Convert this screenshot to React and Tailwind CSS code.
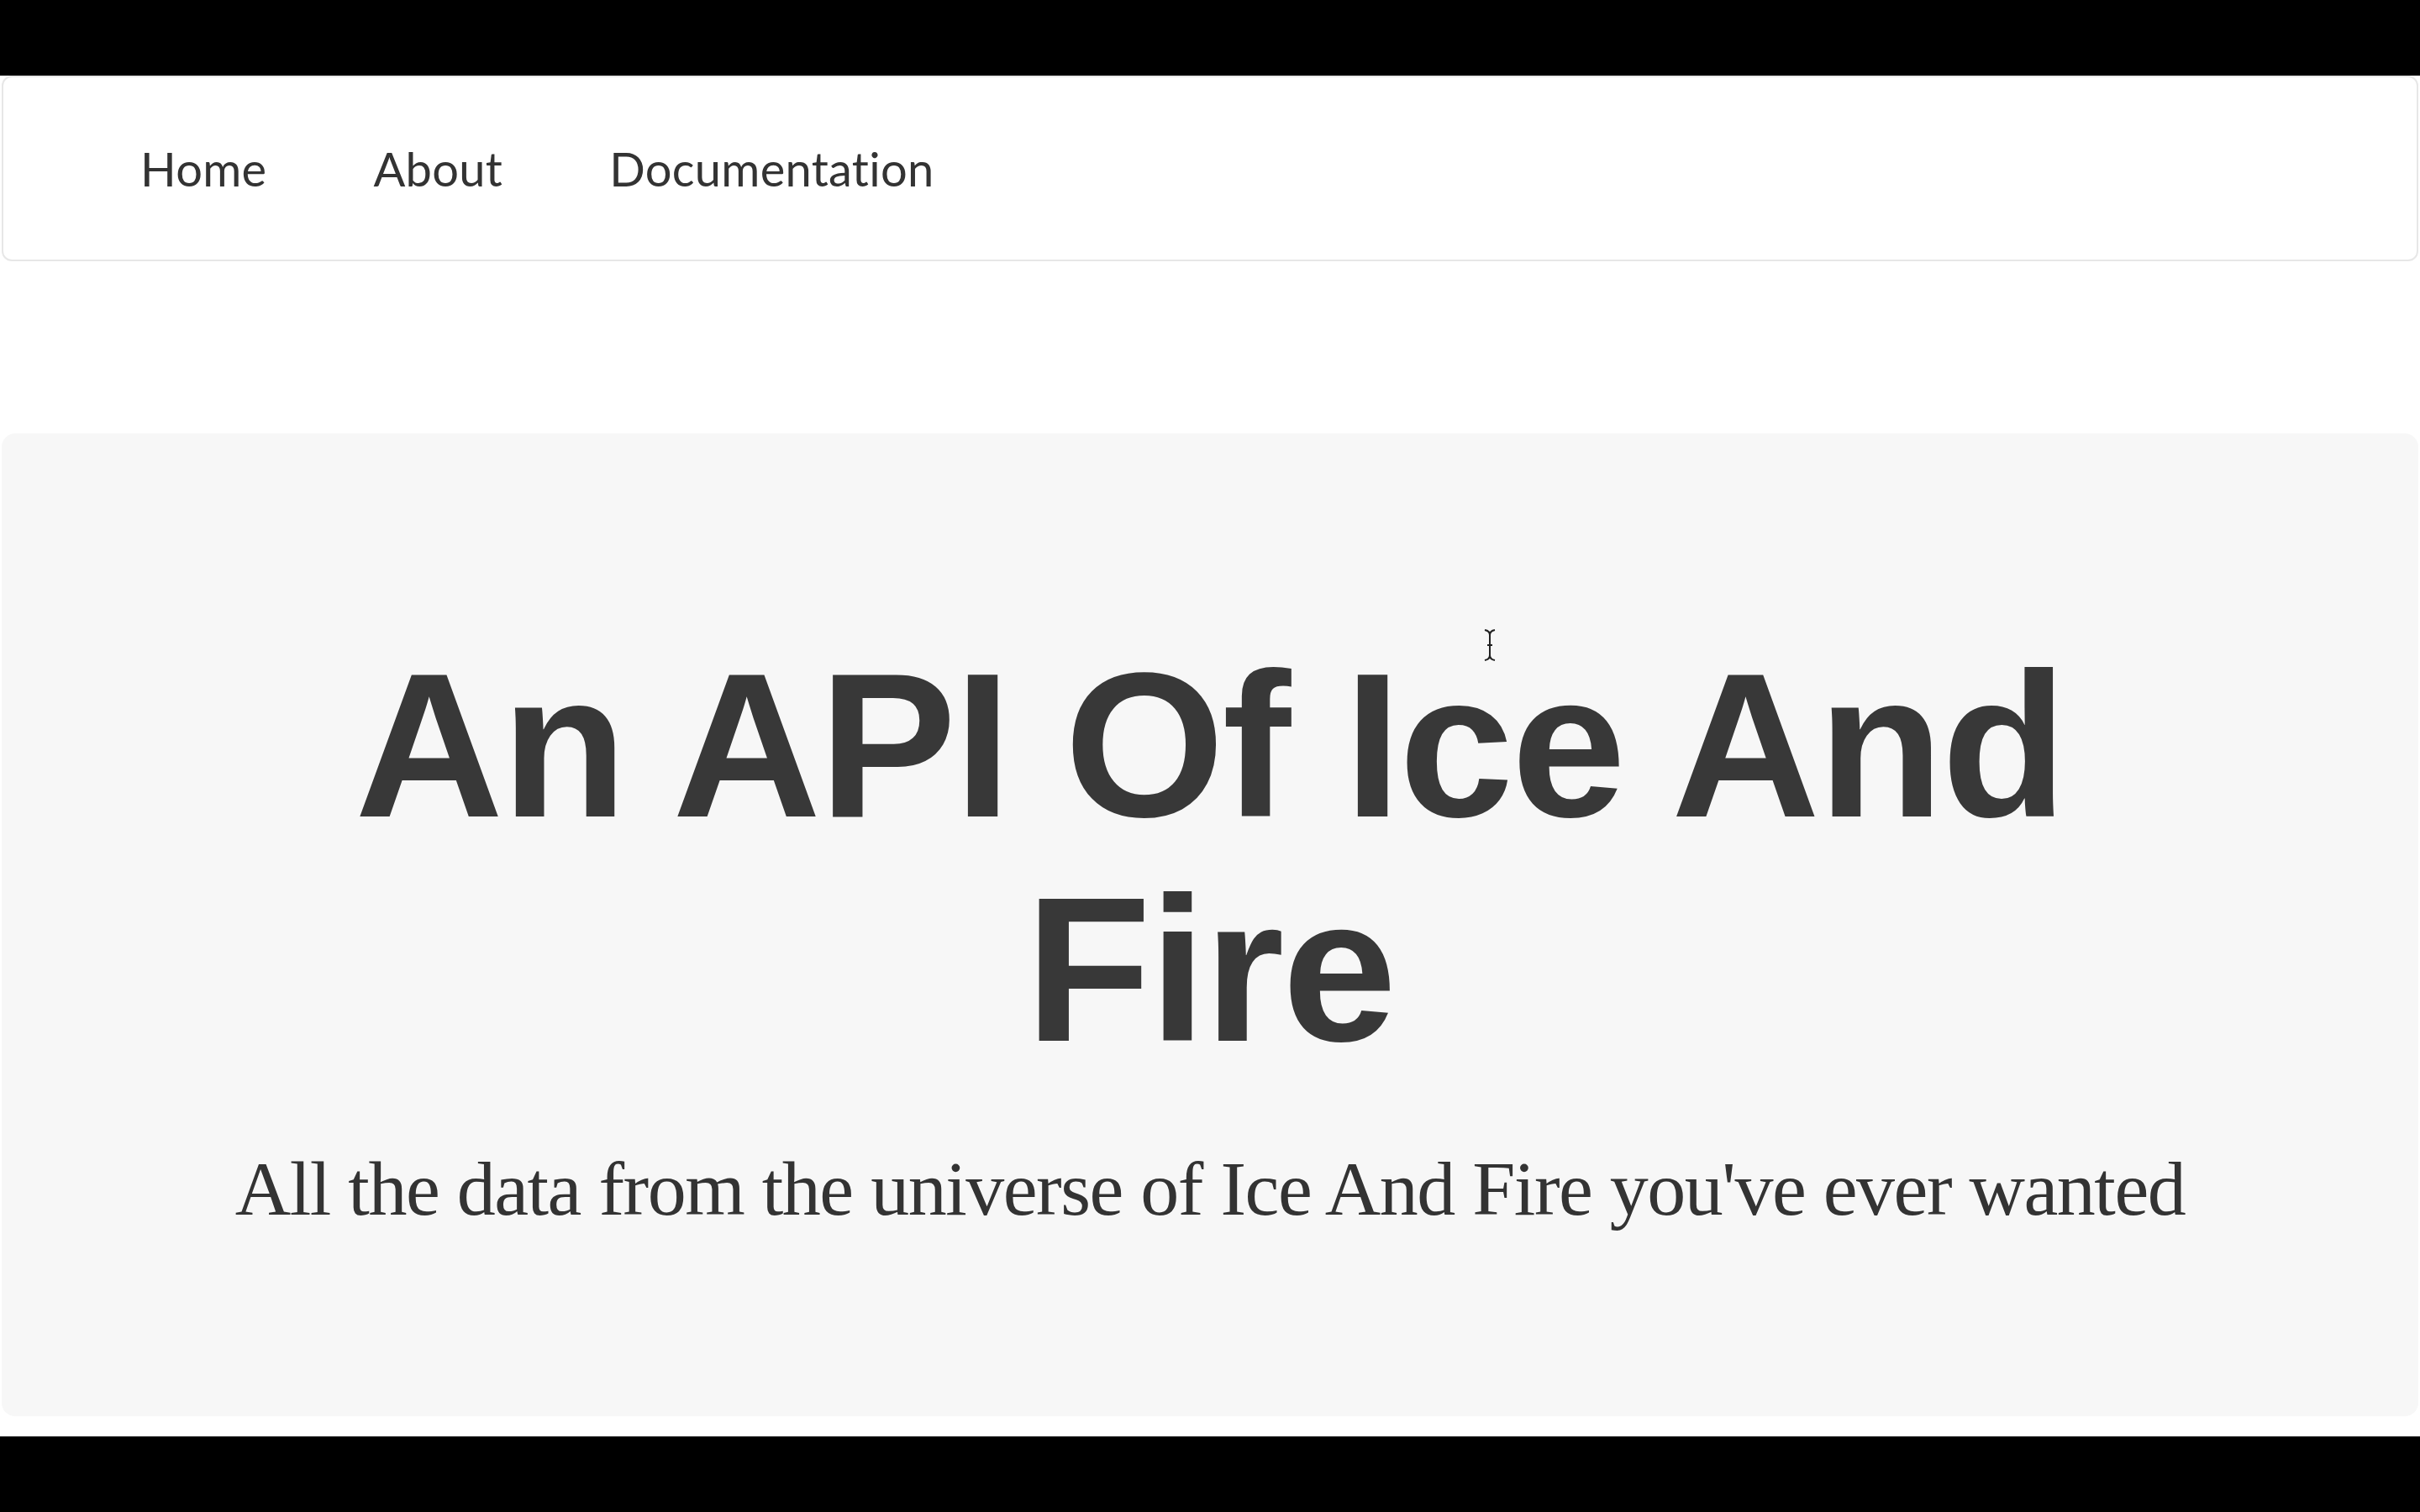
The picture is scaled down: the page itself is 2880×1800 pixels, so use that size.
import React from 'react';

const links = ['Home', 'About', 'Documentation'];

function TextCursor() {
    return (
        <svg className="absolute left-[1764px] top-[748px]" width="18" height="40" viewBox="0 0 18 40" fill="none">
            <path d="M3 2 Q9 3 9 8 Q9 3 15 2 M9 8 V32 M3 38 Q9 37 9 32 Q9 37 15 38 M6 20 H12" stroke="#222" strokeWidth="2" />
        </svg>
    );
}

export default function App() {
    return (
        <div className="relative w-[2880px] h-[1800px] bg-black flex flex-col overflow-hidden">
            <div className="h-[90px] shrink-0" />
            <div className="flex-1 bg-white flex flex-col px-[2px]">
                <nav className="h-[221px] shrink-0 border-2 border-[#e7e7e7] rounded-[12px] bg-white flex items-center pl-[163px]">
                    {links.map((l) => (
                        <a
                            key={l}
                            href="#"
                            className="mr-[127px] text-[56px] tracking-[0.3px] text-[#333] font-['Lato','Noto_Sans',sans-serif]"
                        >
                            {l}
                        </a>
                    ))}
                </nav>
                <section className="mt-[205px] h-[1170px] shrink-0 bg-[#f7f7f7] rounded-[16px] flex flex-col items-center pt-[238px]">
                    <h1 className="text-center text-[245px] leading-[267px] tracking-[-2.5px] font-bold text-[#383838] w-[2200px] font-['Liberation_Sans','Arial',sans-serif]">
                        An API Of Ice And Fire
                    </h1>
                    <p className="mt-[67px] text-[92px] leading-[120px] tracking-[-1.5px] text-[#333] font-['Liberation_Serif','Georgia',serif]">
                        All the data from the universe of Ice And Fire you've ever wanted
                    </p>
                </section>
            </div>
            <div className="h-[90px] shrink-0 bg-black" />
            <TextCursor />
        </div>
    );
}
